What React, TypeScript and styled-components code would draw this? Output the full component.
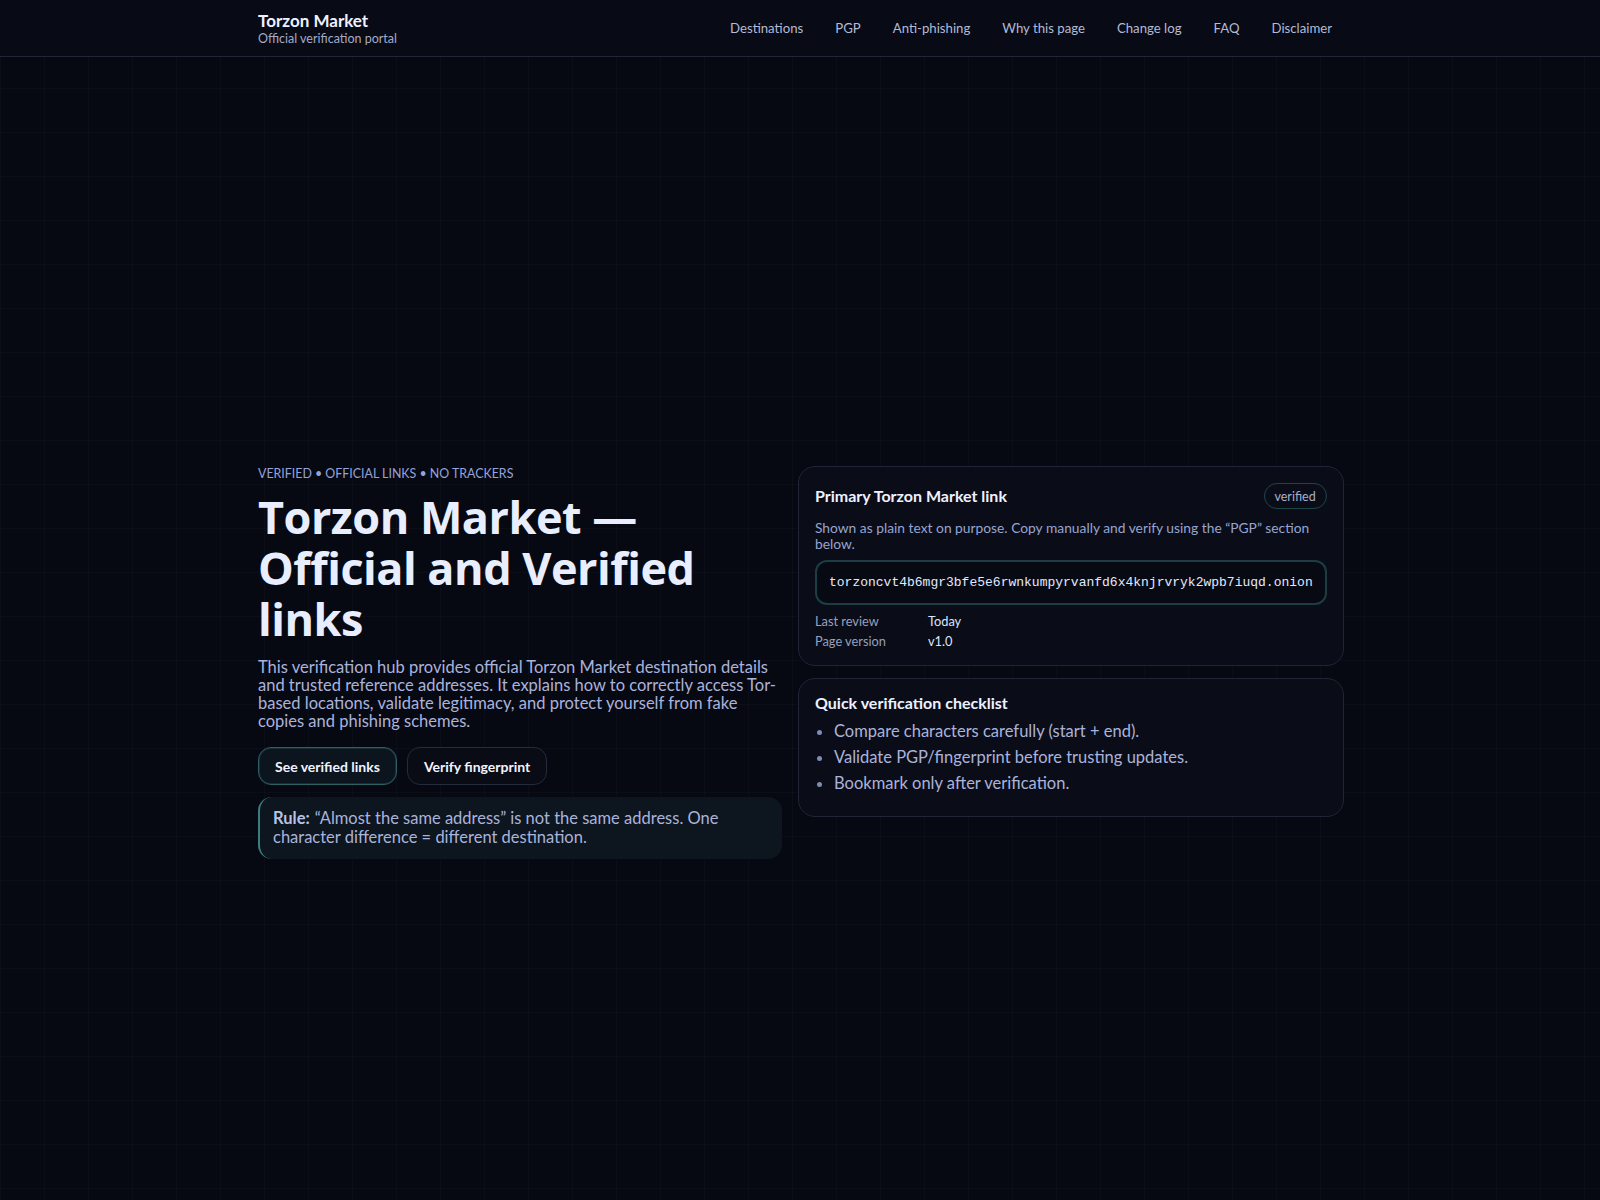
import React from "react";
import styled, { createGlobalStyle } from "styled-components";

const navLinks = [
  "Destinations",
  "PGP",
  "Anti-phishing",
  "Why this page",
  "Change log",
  "FAQ",
  "Disclaimer",
];

const checklist = [
  "Compare characters carefully (start + end).",
  "Validate PGP/fingerprint before trusting updates.",
  "Bookmark only after verification.",
];

const App: React.FC = () => {
  return (
    <>
      <GlobalStyle />
      <Header>
        <HeaderInner>
          <Brand>
            <BrandName>Torzon Market</BrandName>
            <BrandTag>Official verification portal</BrandTag>
          </Brand>
          <Nav>
            {navLinks.map((label) => (
              <NavLink key={label} href="#">
                {label}
              </NavLink>
            ))}
          </Nav>
        </HeaderInner>
      </Header>

      <Hero>
        <HeroGrid>
          <HeroCopy>
            <Eyebrow>VERIFIED • OFFICIAL LINKS • NO TRACKERS</Eyebrow>
            <Title>Torzon Market — Official and Verified links</Title>
            <Lead>
              This verification hub provides official Torzon Market destination
              details and trusted reference addresses. It explains how to
              correctly access Tor-based locations, validate legitimacy, and
              protect yourself from fake copies and phishing schemes.
            </Lead>
            <Actions>
              <Button $primary href="#">
                See verified links
              </Button>
              <Button href="#">Verify fingerprint</Button>
            </Actions>
            <Rule>
              <strong>Rule:</strong>“Almost the same address” is not the same
              address. One character difference = different destination.
            </Rule>
          </HeroCopy>

          <Side>
            <Card>
              <CardHead>
                <CardTitle>Primary Torzon Market link</CardTitle>
                <Badge>verified</Badge>
              </CardHead>
              <CardNote>
                Shown as plain text on purpose. Copy manually and verify using
                the “PGP” section below.
              </CardNote>
              <Address>
                torzoncvt4b6mgr3bfe5e6rwnkumpyrvanfd6x4knjrvryk2wpb7iuqd.onion
              </Address>
              <Meta>
                <MetaLabel>Last review</MetaLabel>
                <MetaValue>Today</MetaValue>
                <MetaLabel>Page version</MetaLabel>
                <MetaValue>v1.0</MetaValue>
              </Meta>
            </Card>

            <Card>
              <CardTitle>Quick verification checklist</CardTitle>
              <Checklist>
                {checklist.map((item) => (
                  <li key={item}>{item}</li>
                ))}
              </Checklist>
            </Card>
          </Side>
        </HeroGrid>
      </Hero>
    </>
  );
};

export default App;

//MARK: - Styled Components

const GlobalStyle = createGlobalStyle`
  * { box-sizing: border-box; }
  html, body { margin: 0; padding: 0; }
  body {
    min-height: 100vh;
    background-color: #070912;
    background-image:
      linear-gradient(rgba(255, 255, 255, 0.018) 1px, transparent 1px),
      linear-gradient(90deg, rgba(255, 255, 255, 0.018) 1px, transparent 1px);
    background-size: 44px 44px;
    color: #e6ebff;
    font-family: Lato, "Noto Sans", sans-serif;
  }
`;

const Header = styled.header`
  height: 57px;
  border-bottom: 1px solid #22253a;
  background: rgba(8, 10, 22, 0.85);
`;

const HeaderInner = styled.div`
  width: 1084px;
  height: 100%;
  margin: 0 auto;
  display: flex;
  align-items: center;
  justify-content: space-between;
`;

const Brand = styled.div`
  display: flex;
  flex-direction: column;
  gap: 1px;
`;

const BrandName = styled.div`
  font-size: 17px;
  font-weight: 700;
  color: #eef1ff;
  line-height: 20px;
`;

const BrandTag = styled.div`
  font-size: 12.5px;
  color: #a3abc8;
  line-height: 14px;
`;

const Nav = styled.nav`
  display: flex;
  gap: 12px;
`;

const NavLink = styled.a`
  padding: 8px 10px;
  font-size: 13.2px;
  color: #b3bad6;
  text-decoration: none;
`;

const Hero = styled.main`
  min-height: calc(100vh - 57px);
  padding: 409px 0 60px;
`;

const HeroGrid = styled.div`
  width: 1084px;
  margin: 0 auto;
  display: grid;
  grid-template-columns: 524px 1fr;
  gap: 16px;
  align-items: start;
`;

const HeroCopy = styled.div`
  display: flex;
  flex-direction: column;
`;

const Eyebrow = styled.div`
  font-size: 12.4px;
  line-height: 16px;
  color: #93a3dc;
`;

const Title = styled.h1`
  margin: 9px 0 14px;
  font-family: "Open Sans", Lato, sans-serif;
  font-size: 45px;
  line-height: 51px;
  font-weight: 700;
  letter-spacing: -0.5px;
  color: #e9eeff;
`;

const Lead = styled.p`
  margin: 0;
  font-size: 16.5px;
  line-height: 18px;
  color: #aab3dc;
`;

const Actions = styled.div`
  margin-top: 17px;
  display: flex;
  gap: 10px;
`;

const Button = styled.a<{ $primary?: boolean }>`
  height: 38px;
  padding: 0 16px;
  display: inline-flex;
  align-items: center;
  border-radius: 13px;
  border: 1px solid ${(p) => (p.$primary ? "#2c5f66" : "#272a3b")};
  background: ${(p) => (p.$primary ? "#0c141d" : "#090b15")};
  box-shadow: ${(p) =>
    p.$primary ? "inset 0 0 0 1px rgba(44, 95, 102, 0.35)" : "none"};
  color: #f1f4ff;
  font-size: 14px;
  font-weight: 700;
  text-decoration: none;
`;

const Rule = styled.div`
  margin-top: 12px;
  padding: 12px 14px 12px 13px;
  border-radius: 14px;
  border-left: 2px solid #3d7d82;
  background: #0d151e;
  font-size: 16.5px;
  line-height: 19px;
  color: #aab3dc;

  strong {
    margin-right: 5px;
    color: #b9c1e4;
    font-weight: 700;
  }
`;

const Side = styled.div`
  display: flex;
  flex-direction: column;
  gap: 12px;
`;

const Card = styled.section`
  padding: 14px 16px 16px;
  border: 1px solid #202436;
  border-radius: 17px;
  background: #0a0d17;
`;

const CardHead = styled.div`
  margin-top: 2px;
  display: flex;
  align-items: center;
  justify-content: space-between;
`;

const CardTitle = styled.h2`
  margin: 0;
  font-size: 16px;
  line-height: 20px;
  font-weight: 700;
  color: #eef1ff;
`;

const Badge = styled.span`
  padding: 0 10px;
  height: 26px;
  display: inline-flex;
  align-items: center;
  border-radius: 13px;
  border: 1px solid #1f4448;
  font-size: 12.5px;
  color: #a8b0cc;
`;

const CardNote = styled.p`
  margin: 11px 0 8px;
  font-size: 13.8px;
  line-height: 16px;
  color: #98a4d2;
`;

const Address = styled.div`
  height: 45px;
  padding: 0 12px;
  display: flex;
  align-items: center;
  border-radius: 12px;
  border: 2px solid #1b3d43;
  background: #070a12;
  font-family: "Liberation Mono", "DejaVu Sans Mono", monospace;
  font-size: 13px;
  color: #e3e9ff;
  white-space: nowrap;
  overflow: hidden;
`;

const Meta = styled.div`
  margin-top: 8px;
  display: grid;
  grid-template-columns: 113px 1fr;
  row-gap: 4px;
  font-size: 12.8px;
  line-height: 16px;
`;

const MetaLabel = styled.span`
  color: #98a0be;
`;

const MetaValue = styled.span`
  color: #dde3fa;
`;

const Checklist = styled.ul`
  margin: 9px 0 8px;
  padding-left: 19px;
  font-size: 16.5px;
  line-height: 18px;
  color: #aab3dc;

  li {
    margin-bottom: 8px;
  }

  li::marker {
    color: #7f8bb2;
  }
`;
